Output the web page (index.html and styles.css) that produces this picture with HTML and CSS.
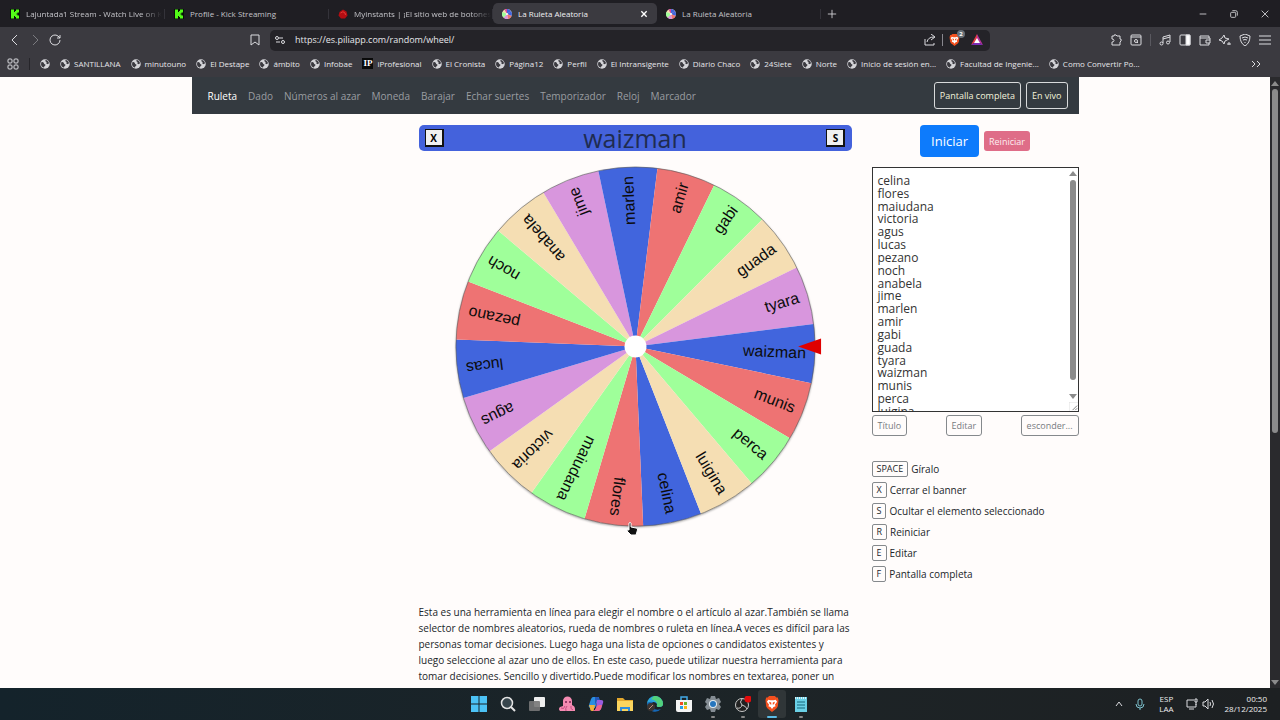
FILE: index.html
```html
<!DOCTYPE html>
<html lang="es">
<head>
<meta charset="utf-8" />
<title>La Ruleta Aleatoria</title>
	<link rel="stylesheet" href="styles.css">
</head>

<body>
	<!-- iconos -->
	<svg class="sprite" aria-hidden="true">
		<symbol id="globe" viewBox="0 0 20 20"><circle cx="10" cy="10" r="9.5" fill="#d4d4d8"/><path d="M3 6c3 0 5 1 5 3s3 1 3 3-3 2-3 5c-3 0-6-3-6-7zM11 2c-1 3 1 3 2 4s-2 3 1 4 2-1 4-1c0-3-3-7-7-7z" fill="#3b3a40"/></symbol>
		<symbol id="kick" viewBox="0 0 20 20"><path fill="#071207" d="M0 0h20v20H0z"/><path fill="#53fc18" d="M2 1h6v5h2V4h2V1h6v6h-3v2h-2v2h2v2h3v6h-6v-3h-2v-2H8v5H2z"/></symbol>
		<symbol id="wheel" viewBox="0 0 20 20"><circle cx="10" cy="10" r="10" fill="#f5deb3"/><path d="M10 10V0a10 10 0 0 1 8 4z" fill="#4165dd"/><path d="M10 10l8-6a10 10 0 0 1 1 10z" fill="#4165dd"/><path d="M10 10l9 4a10 10 0 0 1-7 6z" fill="#ee7373"/><path d="M10 10l2 10a10 10 0 0 1-9-3z" fill="#d896dd"/><path d="M10 10l-7 7a10 10 0 0 1-2-11z" fill="#9fff9a"/><path d="M10 10L5 1a10 10 0 0 1 5-1z" fill="#d84a9a"/><circle cx="10" cy="10" r="2" fill="#fff"/></symbol>
		<symbol id="brave" viewBox="0 0 20 22"><path fill="#f4501e" d="M6 0h8l2 2h2l1 4-1 8q-1 3-4 5l-4 3-4-3q-3-2-4-5L1 6l1-4h2z"/><path fill="#fff" d="M5 5l3 1h4l3-1 2 3-3 4 1 2-3 1-2 3-2-3-3-1 1-2-3-4z"/><path fill="#f4501e" d="M6 8l3 1v3l-2-1zm8 0l-3 1v3l2-1z"/></symbol>
	</svg>

	<header class="browser">
		<div class="tabs">
			<a class="tab" href="#"><svg class="favicon"><use href="#kick"/></svg><span class="tab-title fade">Lajuntada1 Stream - Watch Live on K</span></a>
			<a class="tab" href="#"><svg class="favicon"><use href="#kick"/></svg><span class="tab-title">Profile - Kick Streaming</span></a>
			<a class="tab" href="#"><svg class="favicon" viewBox="0 0 20 20"><path d="M3 6l7-5 7 4 2 8-5 6H6l-5-6z" fill="#b30d12"/><path d="M5 8q5-5 9 0l1 4" fill="none" stroke="#e03a35" stroke-width="2"/></svg><span class="tab-title fade">Myinstants | ¡El sitio web de botones</span></a>
			<a class="tab active" href="#"><svg class="favicon"><use href="#wheel"/></svg><span class="tab-title">La Ruleta Aleatoria</span><span class="close"><svg viewBox="0 0 12 12"><path d="M2 2l8 8M10 2l-8 8"/></svg></span></a>
			<a class="tab" href="#"><svg class="favicon"><use href="#wheel"/></svg><span class="tab-title">La Ruleta Aleatoria</span></a>
			<button class="icon-btn new-tab" aria-label="Nueva pestaña"><svg viewBox="0 0 12 12"><path d="M6 1v10M1 6h10"/></svg></button>
			<div class="window-btns">
				<button class="icon-btn" aria-label="Minimizar"><svg viewBox="0 0 12 12"><path d="M2 6h8"/></svg></button>
				<button class="icon-btn" aria-label="Restaurar"><svg viewBox="0 0 12 12"><rect x="2" y="4" width="6" height="6" rx="1"/><path d="M4 2h4q2 0 2 2v4"/></svg></button>
				<button class="icon-btn" aria-label="Cerrar"><svg viewBox="0 0 12 12"><path d="M2 2l8 8M10 2l-8 8"/></svg></button>
			</div>
		</div>

		<div class="toolbar">
			<div class="nav-btns">
				<button class="icon-btn" aria-label="Atrás"><svg viewBox="0 0 12 12"><path d="M8 1L3 6l5 5"/></svg></button>
				<button class="icon-btn dim" aria-label="Adelante"><svg viewBox="0 0 12 12"><path d="M4 1l5 5-5 5"/></svg></button>
				<button class="icon-btn" aria-label="Recargar"><svg viewBox="0 0 12 12"><path d="M11 6a5 5 0 1 1-2-4l2 2M11 1v3H8"/></svg></button>
				<button class="icon-btn save" aria-label="Guardar"><svg viewBox="0 0 12 12"><path d="M2 1h8v10L6 8l-4 3z"/></svg></button>
			</div>
			<div class="address">
				<svg class="line-icon" viewBox="0 0 12 12"><circle cx="3" cy="4" r="1.5"/><path d="M5 4h4M2 8h4"/><circle cx="9" cy="8" r="1.5"/></svg>
				<input class="url" type="text" aria-label="Dirección" value="https://es.piliapp.com/random/wheel/">
				<svg class="line-icon" viewBox="0 0 12 12"><path d="M1 5v6h9V9M3 8q1-5 7-5M7 0l4 3-4 3"/></svg>
				<span class="divider light"></span>
				<span class="shield"><svg><use href="#brave"/></svg><b class="badge">2</b></span>
				<svg class="bat" viewBox="0 0 12 12"><path fill="#e23a45" d="M6 0L0 11l6-4z"/><path fill="#7b2bb5" d="M0 11h12L6 7z"/><path fill="#b4319a" d="M6 0l6 11-6-4z"/><path fill="#fff" d="M6 4l3 5H3z"/></svg>
			</div>
			<div class="actions">
				<button class="icon-btn" aria-label="Extensiones"><svg viewBox="0 0 12 12"><path d="M2 2h2q0-2 2-1l1 1h3v3q2 0 1 2l-1 1v3H2V8q2 0 2-1.500T2 5z"/></svg></button>
				<button class="icon-btn" aria-label="Buscar"><svg viewBox="0 0 12 12"><rect x="1" y="1" width="10" height="10" rx="1"/><path d="M1 3h10M7 8l1 1"/><circle cx="6" cy="7" r="1.500"/></svg></button>
				<span class="divider"></span>
				<button class="icon-btn" aria-label="Música"><svg viewBox="0 0 12 12"><circle cx="2.500" cy="9.500" r="1.500"/><circle cx="9" cy="8.500" r="1.500"/><path d="M4 9V3l7-2v7M4 5l7-2"/></svg></button>
				<button class="icon-btn" aria-label="Barra lateral"><svg viewBox="0 0 12 12"><rect x="1" y="1" width="10" height="10" rx="1"/><path d="M7 1h4v10H7z" fill="#fff"/></svg></button>
				<button class="icon-btn" aria-label="Cartera"><svg viewBox="0 0 12 12"><path d="M10 4V2H1v9h9V9M1 4h10v5H7V6h4"/></svg></button>
				<button class="icon-btn" aria-label="Leo"><svg viewBox="0 0 12 12"><path d="M5 1l1 3 4 1-4 2-1 3-2-3-3-1 3-2zM10 8v3M8 10h4"/></svg></button>
				<button class="icon-btn" aria-label="VPN"><svg viewBox="0 0 12 12"><path d="M6 0l5 2q0 7-5 10Q1 9 1 2zM3 4q3-2 6 0M4 6q2-1 4 0M6 8v1"/></svg></button>
				<button class="icon-btn" aria-label="Menú"><svg viewBox="0 0 12 12"><path d="M0 2h12M0 6h12M0 10h12"/></svg></button>
			</div>
		</div>

		<nav class="bookmarks">
			<button class="icon-btn" aria-label="Grupos"><svg viewBox="0 0 12 12"><rect x="1" y="1" width="4" height="4" rx="1"/><rect x="7" y="1" width="4" height="4" rx="1"/><rect x="1" y="7" width="4" height="4" rx="1"/><rect x="7" y="7" width="4" height="4" rx="1"/></svg></button>
			<span class="divider dark"></span>
			<a href="#" aria-label="Marcador"><svg><use href="#globe"/></svg></a>
			<a href="#"><svg><use href="#globe"/></svg>SANTILLANA</a>
			<a href="#"><svg><use href="#globe"/></svg>minutouno</a>
			<a href="#"><svg><use href="#globe"/></svg>El Destape</a>
			<a href="#"><svg><use href="#globe"/></svg>ámbito</a>
			<a href="#"><svg><use href="#globe"/></svg>Infobae</a>
			<a href="#"><span class="ip">IP</span>iProfesional</a>
			<a href="#"><svg><use href="#globe"/></svg>El Cronista</a>
			<a href="#"><svg><use href="#globe"/></svg>Página12</a>
			<a href="#"><svg><use href="#globe"/></svg>Perfil</a>
			<a href="#"><svg><use href="#globe"/></svg>El Intransigente</a>
			<a href="#"><svg><use href="#globe"/></svg>Diario Chaco</a>
			<a href="#"><svg><use href="#globe"/></svg>24Siete</a>
			<a href="#"><svg><use href="#globe"/></svg>Norte</a>
			<a href="#"><svg><use href="#globe"/></svg>Inicio de sesión en...</a>
			<a href="#"><svg><use href="#globe"/></svg>Facultad de Ingenie...</a>
			<a href="#"><svg><use href="#globe"/></svg>Como Convertir Po...</a>
			<button class="icon-btn more" aria-label="Más marcadores"><svg viewBox="0 0 12 12"><path d="M2 3l3 3-3 3M7 3l3 3-3 3"/></svg></button>
		</nav>
	</header>

	<div class="viewport">
		<div class="page">
			<nav class="navbar">
				<a class="current" href="#">Ruleta</a>
				<a href="#">Dado</a>
				<a href="#">Números al azar</a>
				<a href="#">Moneda</a>
				<a href="#">Barajar</a>
				<a href="#">Echar suertes</a>
				<a href="#">Temporizador</a>
				<a href="#">Reloj</a>
				<a href="#">Marcador</a>
				<button class="outline first">Pantalla completa</button>
				<button class="outline">En vivo</button>
			</nav>

			<div class="content">
				<main class="main">
					<div class="banner">
						<button class="key-btn">X</button>
						<span id="winner">waizman</span>
						<button class="key-btn">S</button>
					</div>
					<div class="wheel-box">
						<svg class="wheel" id="ruleta" viewBox="-217 -180 434 362"></svg>
						<svg class="cursor" viewBox="0 0 12 14"><path d="M3 1q1.500-1 2 0v4l5 1q2 0 1.500 2L10 13H5L1 9q0-2 2-1z" fill="#111" stroke="#fff"/></svg>
					</div>
					<p class="description">Esta es una herramienta en línea para elegir el nombre o el artículo al azar.También se llama<br>
					selector de nombres aleatorios, rueda de nombres o ruleta en línea.A veces es difícil para las<br>
					personas tomar decisiones. Luego haga una lista de opciones o candidatos existentes y<br>
					luego seleccione al azar uno de ellos. En este caso, puede utilizar nuestra herramienta para<br>
					tomar decisiones. Sencillo y divertido.Puede modificar los nombres en textarea, poner un</p>
				</main>

				<aside class="side">
					<div class="start-row">
						<button class="start">Iniciar</button>
						<button class="reset">Reiniciar</button>
					</div>
					<div class="list-box">
						<textarea id="names" aria-label="Nombres" spellcheck="false">celina
flores
maiudana
victoria
agus
lucas
pezano
noch
anabela
jime
marlen
amir
gabi
guada
tyara
waizman
munis
perca
luigina</textarea>
						<div class="scrollbar in-list"><i class="up"></i><i class="thumb"></i><i class="down"></i></div>
						<svg class="grip" viewBox="0 0 10 10"><path d="M0 10V0h10" stroke="#ddd"/><path d="M4 9l5-5M7 9l2-2" stroke="#777"/></svg>
					</div>
					<div class="list-btns">
						<button>Título</button>
						<button>Editar</button>
						<button>esconder...</button>
					</div>
					<ul class="shortcuts">
						<li><kbd>SPACE</kbd>Gíralo</li>
						<li><kbd>X</kbd>Cerrar el banner</li>
						<li><kbd>S</kbd>Ocultar el elemento seleccionado</li>
						<li><kbd>R</kbd>Reiniciar</li>
						<li><kbd>E</kbd>Editar</li>
						<li><kbd>F</kbd>Pantalla completa</li>
					</ul>
				</aside>
			</div>
		</div>
		<div class="scrollbar page-scroll"><i class="up"></i><i class="thumb"></i><i class="down"></i></div>
	</div>

	<footer class="taskbar">
		<div class="apps">
			<button aria-label="Inicio"><svg viewBox="0 0 16 16"><path fill="#4cc2f5" d="M0 0h7.500v7.500H0zM8.500 0H16v7.500H8.500zM0 8.500h7.500V16H0zM8.500 8.500H16V16H8.500z"/></svg></button>
			<button aria-label="Buscar"><svg viewBox="0 0 16 16"><circle cx="7" cy="7" r="5.500" fill="#38464d" stroke="#e4e4e4" stroke-width="1.500"/><path d="M11 11l4 4" stroke="#e4e4e4" stroke-width="2"/></svg></button>
			<button aria-label="Vista de tareas"><svg viewBox="0 0 16 16"><rect x="5" y="1" width="11" height="10" rx="1" fill="#eee"/><rect x="0" y="5" width="11" height="10" rx="1" fill="#777" opacity=".9"/></svg></button>
			<button aria-label="Pulpo"><svg viewBox="0 0 16 16"><path fill="#f58bb2" d="M4 5a4.500 4.500 0 0 1 9 0v4q3 1 3 4v2H1q-2-2 0-4l3-1z"/><path d="M2 12q3 2 4-2M7 15q-1-3 1-5M12 10q-1 3 2 4" fill="none" stroke="#c64f83"/><circle cx="7" cy="6" r="1" fill="#7b2450"/><circle cx="11" cy="6" r="1" fill="#7b2450"/></svg></button>
			<button aria-label="Copilot"><svg viewBox="0 0 16 16"><path fill="#2a8de0" d="M5 1h6l-4 11H3Q0 12 1 9l2-6q1-2 2-2z"/><path fill="#f0b13c" d="M1 9h6l-1 4q-1 2 1 2H4q-2 0-2-3z"/><path fill="#9a5de0" d="M9 4h4q3 0 2 3l-2 6q-1 2-3 2H5q2 0 3-3z"/><path fill="#f0648a" d="M8 12q1-3 3-3h3l-1 4q-1 2-3 2H5q2 0 3-3z"/><path fill="#2457b8" d="M7 1h3q1 0 2 3H9L7 9z"/></svg></button>
			<button aria-label="Explorador"><svg viewBox="0 0 16 16"><path fill="#e3a72d" d="M0 2h6l2 2h8v11H0z"/><path fill="#fbd55e" d="M0 5h16v10H0z"/><path fill="#2f8ddc" d="M3 15v-4h10v4h-2v-2H5v2z"/></svg></button>
			<button aria-label="Edge"><svg viewBox="0 0 16 16"><path fill="#2ba5dc" d="M0 8a8 8 0 0 1 16 0q0 3-4 3-3 0-2-2 0-3-4-3T0 8z"/><path fill="#52d17c" d="M7 0a8 8 0 0 1 9 8q0 3-4 3-3 0-2-2 1-4-6-6z"/><path fill="#1468b8" d="M0 8q1-3 6-2-3 3 0 6t8 1a8 8 0 0 1-14-5z"/><circle cx="4" cy="11" r="4" fill="#3c3431"/><path d="M2 13l4-4" stroke="#b98f7b"/></svg></button>
			<button aria-label="Tienda"><svg viewBox="0 0 16 16"><path d="M5 4V1h6v3" fill="none" stroke="#42a9e8" stroke-width="1.500"/><path fill="#f4f4f4" d="M0 4h16v10q0 2-2 2H2q-2 0-2-2z"/><path fill="#f04a24" d="M4 6h3v3H4z"/><path fill="#6eb52c" d="M8 6h3v3H8z"/><path fill="#259fe3" d="M4 10h3v3H4z"/><path fill="#fbb413" d="M8 10h3v3H8z"/></svg></button>
			<button class="open" aria-label="Configuración"><svg viewBox="0 0 16 16"><path fill="#858d94" d="M6 0h4l1 3 3-1 2 4-2 2 2 3-2 3-3-1-1 3H6l-1-3-3 1-2-3 2-3-2-2 2-4 3 1z"/><circle cx="8" cy="8" r="4" fill="#e2eaf0"/><circle cx="8" cy="8" r="3" fill="#2675bd"/></svg></button>
			<button class="open" aria-label="OBS"><svg viewBox="0 0 16 16"><circle cx="7" cy="9" r="6.500" fill="#222" stroke="#c9c9c9"/><path d="M7 3q-3 3 0 6M7 9q4 1 5 4M7 9q-1 4-5 3" fill="none" stroke="#c9c9c9"/><circle cx="13" cy="3" r="3.500" fill="#e30b0b"/></svg></button>
			<button class="open selected" aria-label="Brave"><svg><use href="#brave"/></svg></button>
			<button class="open" aria-label="Bloc de notas"><svg viewBox="0 0 16 16"><path fill="#6bd0e6" d="M2 1h12v15H2z"/><path d="M2 2h12" stroke="#d9f4fa" stroke-width="2" stroke-dasharray="1 1"/><path d="M4 6h8M4 9h8M4 12h8" stroke="#17687d"/></svg></button>
		</div>
		<div class="tray">
			<svg class="line-icon" viewBox="0 0 12 12"><path d="M3 8l3-4 3 4"/></svg>
			<svg class="line-icon mic" viewBox="0 0 12 12"><rect x="4" y="1" width="4" height="7" rx="2"/><path d="M2 6q0 4 4 4t4-4M6 10v2"/></svg>
			<span class="lang">ESP<br>LAA</span>
			<svg class="line-icon" viewBox="0 0 12 12"><path d="M8 2H1v7h9V6M3 11h5M9 1h2v3H9zM10 4v3"/></svg>
			<svg class="line-icon sound" viewBox="0 0 12 12"><path d="M1 4h2l3-3v10L3 8H1zM8 4q1 2 0 4M10 2q3 4 0 8"/></svg>
			<span class="clock">00:50<br>28/12/2025</span>
		</div>
	</footer>

	<script src="wheel.js"></script>
</body>
</html>
```
FILE: wheel.js
```js
//获取元素
var ruleta = document.getElementById("ruleta");
var names = document.getElementById("names").value.split("\n");
var colors = ["#4165dd", "#ee7373", "#9fff9a", "#f5deb3", "#d896dd"];
var R = 180;
var step = 360 / names.length;
//第一项的起始角度
var start = 68.6;
//每一项的颜色
var order = [0, 1, 2, 3, 4, 0, 1, 2, 3, 4, 0, 1, 2, 3, 4, 0, 1, 2, 3];

function point(deg) {
	var rad = deg * Math.PI / 180;
	return (R * Math.cos(rad)).toFixed(2) + " " + (R * Math.sin(rad)).toFixed(2);
}

var html = '<circle class="wheel-shadow" r="180"/>';
for (var i = 0; i < names.length; i++) {
	var a = start + i * step;
	html += '<path fill="' + colors[order[i]] + '" d="M0 0L' + point(a) + 'A180 180 0 0 1 ' + point(a + step) + 'z"/>';
	html += '<text class="wheel-text" x="171" y="5" transform="rotate(' + (a + step / 2) + ')">' + names[i] + '</text>';
}
html += '<circle class="wheel-edge" r="180"/>';
html += '<circle r="11" fill="#fff"/>';
html += '<path fill="#e00000" d="M163 0L186 -8V8z"/>';
ruleta.innerHTML = html;
```
FILE: styles.css
```css
*{
	box-sizing: border-box;
}
body{
	margin: 0; height: 100vh;
	display: flex; flex-direction: column;
	font: 10px/16px "Open Sans", "Noto Sans", sans-serif; color: #212529;
	overflow: hidden;
}
a{
	color: inherit; text-decoration: none;
}
button{
	font-family: inherit; cursor: pointer;
}
svg{
	display: block; flex: none;
}
.sprite{
	position: absolute; width: 0; height: 0;
}

/* browser */
.browser{
	flex: none;
	background: #3b3a40; color: #e6e6ea;
	font-size: 8px; line-height: 12px;
}
.icon-btn{
	width: 12px; height: 12px; padding: 0;
	border: 0; background: none; flex: none;
}
.icon-btn svg, .line-icon, .close svg{
	width: 12px; height: 12px;
	fill: none; stroke: #dcdce0; stroke-width: 1;
}
.dim{
	opacity: .4;
}
.divider{
	width: 1px; height: 12px; background: #5a5960; flex: none;
}
.divider.light{
	background: #88878e;
}
.divider.dark{
	background: #26252a;
}
.tabs{
	display: flex; align-items: center;
	height: 27px; padding: 0 8px 0 1px;
	background: #1f1e23; color: #c4c4c9;
}
.tab{
	display: flex; align-items: center; gap: 6px;
	flex: 0 1 164px; min-width: 0; height: 21px; padding: 0 4px 0 9px;
	background: linear-gradient(#34333a, #34333a) right center / 1px 10px no-repeat;
}
.tab.active{
	padding-right: 9px;
	background: #3b3a40; color: #f0f0f3;
	border-radius: 5px;
}
.favicon{
	width: 10px; height: 10px;
}
.tab-title{
	flex: 1; white-space: nowrap;
}
.fade{
	-webkit-mask-image: linear-gradient(to right, #000 85%, transparent);
	mask-image: linear-gradient(to right, #000 85%, transparent);
}
.close svg{
	width: 8px; height: 8px; stroke: #fff; stroke-width: 2;
}
.new-tab{
	margin-left: 6px;
}
.new-tab svg, .window-btns svg{
	width: 10px; height: 10px;
}
.window-btns{
	display: flex; gap: 19px; margin-left: auto;
}
.toolbar{
	display: grid; grid-template-columns: 270px minmax(0, 1fr) 290px; align-items: center;
	height: 26px;
}
.nav-btns{
	display: flex; gap: 8px; padding: 0 9px;
}
.nav-btns .save{
	margin-left: auto;
}
.address{
	display: flex; align-items: center; gap: 6px;
	height: 21px; padding: 0 7px 0 4px;
	background: #242328; border-radius: 5px;
}
.url{
	flex: 1; min-width: 0; padding: 0 3px;
	border: 0; background: none; outline: 0;
	font: 9px/16px "Open Sans", sans-serif; color: #e6e6ea;
}
.shield{
	position: relative; width: 14px;
}
.shield svg{
	width: 11px; height: 12px;
}
.badge{
	position: absolute; right: -2px; top: -4px;
	width: 8px; height: 8px; border-radius: 4px;
	background: #687078; color: #fff;
	font-size: 6px; line-height: 8px; text-align: center;
}
.bat{
	width: 12px; height: 12px; margin-left: 2px;
}
.actions{
	display: flex; align-items: center; justify-content: flex-end; gap: 8px;
	padding-right: 9px;
}
.bookmarks{
	display: flex; align-items: center; gap: 10px;
	height: 24px; padding: 0 18px 3px 7px;
	white-space: nowrap;
}
.bookmarks a{
	display: flex; align-items: center; gap: 4px;
}
.bookmarks a svg{
	width: 10px; height: 10px;
}
.ip{
	width: 11px; background: #0a0a0a; color: #fff;
	font: bold 9px/11px "Liberation Serif", serif; text-align: center;
}
.more{
	margin-left: auto;
}

/* page */
.viewport{
	flex: 1; min-height: 0;
	display: flex; background: #fffcfb;
}
.page{
	flex: 1; min-width: 0; overflow: hidden;
}
.navbar{
	display: flex; align-items: center; gap: 11px;
	max-width: 887px; height: 37px; margin: 0 auto; padding: 0 11px 0 16px;
	background: #343a40; color: #9a9da0;
	white-space: nowrap;
}
.navbar .current{
	color: #fff;
}
.outline{
	height: 27px; padding: 0 5px;
	border: 1px solid #d8dadb; border-radius: 3px;
	background: none; color: #f3f3dc;
	font-size: 9px;
}
.outline.first{
	margin-left: auto;
}
.outline + .outline{
	margin-left: -6px;
}
.content{
	display: grid; grid-template-columns: 207px minmax(0, 1fr) 207px; column-gap: 20px;
	max-width: 887px; margin: 0 auto; padding-top: 11px;
}
.main{
	grid-column: 2;
}
.banner{
	display: flex; align-items: center; justify-content: space-between;
	height: 26px; padding: 0 6px;
	background: #4462dc; border-radius: 5px;
	font-size: 25px; line-height: 26px; color: #1f2c50;
}
.key-btn{
	width: 19px; height: 18px; padding: 0;
	border: 1px solid #111; border-right-width: 2px; border-bottom-width: 2px;
	background: #f1f1f1; color: #000;
	font-size: 10px; line-height: 14px; font-weight: bold;
}
.wheel-box{
	position: relative; margin-top: 16px;
}
.wheel{
	width: 100%; overflow: visible;
}
.wheel-text{
	font: 16px "Liberation Sans", Arial, sans-serif; fill: #0c0c0c;
	text-anchor: end;
}
.wheel-shadow{
	fill: #fff; filter: drop-shadow(0 1px 1px #999);
}
.wheel-edge{
	fill: none; stroke: #555; stroke-opacity: .6;
}
.cursor{
	position: absolute; left: 48%; bottom: -8px;
	width: 12px; height: 14px;
}
.description{
	margin: 76px 0 0; white-space: nowrap;
}
.start-row{
	display: flex; align-items: center; justify-content: center; gap: 5px;
	height: 32px;
}
.start{
	height: 32px; padding: 0 11px;
	border: 0; border-radius: 4px;
	background: #0d7bfc; color: #fff;
	font-size: 13px;
}
.reset{
	height: 20px; padding: 0 5px;
	border: 0; border-radius: 3px;
	background: #df6d88; color: #fdeef1;
	font-size: 9px;
}
.list-box{
	position: relative; margin-top: 10px;
}
#names{
	display: block; width: 100%; height: 245px; padding: 7px 5px;
	border: 1px solid #333; background: #fff; color: #333;
	font: 12px/1.07 "Open Sans", "Noto Sans", sans-serif;
	resize: none; overflow: hidden; outline: 0;
}
.scrollbar{
	display: flex; flex-direction: column; align-items: center;
}
.scrollbar .thumb{
	width: 6px; border-radius: 3px; background: #8b8b8b;
}
.up, .down{
	border: 4px solid transparent; border-top-width: 0; border-bottom: 5px solid #8b8b8b;
}
.down{
	border-bottom: 0; border-top: 5px solid #8b8b8b; margin-top: auto;
}
.in-list{
	position: absolute; right: 1px; top: 4px; bottom: 13px; width: 9px;
}
.in-list .thumb{
	flex: 0 0 200px; margin-top: 4px;
}
.grip{
	position: absolute; right: 1px; bottom: 1px;
	width: 9px; height: 9px; fill: none;
}
.list-btns{
	display: flex; justify-content: space-between;
	margin-top: 3px;
}
.list-btns button{
	height: 21px; padding: 0 5px;
	border: 1px solid #85898c; border-radius: 3px;
	background: none; color: #777b7f;
	font-size: 9px;
}
.shortcuts{
	display: grid; row-gap: 5px;
	margin: 25px 0 0; padding: 0; list-style: none;
}
.shortcuts li{
	display: flex; align-items: center; gap: 3px;
}
kbd{
	height: 16px; padding: 0 4px;
	border: 1px solid #85898c; border-radius: 2px;
	font: 9px/14px "Open Sans", sans-serif;
}
.page-scroll{
	width: 10px; padding: 4px 0 3px; background: #2a2a2d;
}
.page-scroll .thumb{
	flex: 0 0 57%; margin-top: 3px;
}

/* taskbar */
.taskbar{
	display: grid; grid-template-columns: 1fr 352px 1fr; align-items: center;
	flex: none; height: 32px;
	background: linear-gradient(to right, #14232b, #1d2427 60%, #1d2022);
	color: #eee; font-size: 8px; line-height: 10px;
}
.apps{
	grid-column: 2;
	display: grid; grid-template-columns: repeat(12, 1fr);
}
.apps button{
	position: relative;
	display: flex; align-items: center; justify-content: center;
	height: 28px; padding: 0; margin: 0 1px;
	border: 0; border-radius: 3px; background: none;
}
.apps svg{
	width: 16px; height: 16px;
}
.apps .selected{
	background: #303638;
}
.open::after{
	content: ""; position: absolute; bottom: 0;
	width: 4px; height: 2px; border-radius: 1px; background: #888;
}
.selected::after{
	width: 10px; background: #5bbce6;
}
.tray{
	display: flex; align-items: center; justify-content: flex-end;
	padding-right: 13px;
}
.mic{
	margin: 0 13px 0 9px;
}
.tray .mic{
	stroke: #7fc4d0;
}
.lang{
	text-align: center; margin-right: 12px;
}
.sound{
	margin: 0 11px 0 4px;
}
.clock{
	text-align: right;
}
```
